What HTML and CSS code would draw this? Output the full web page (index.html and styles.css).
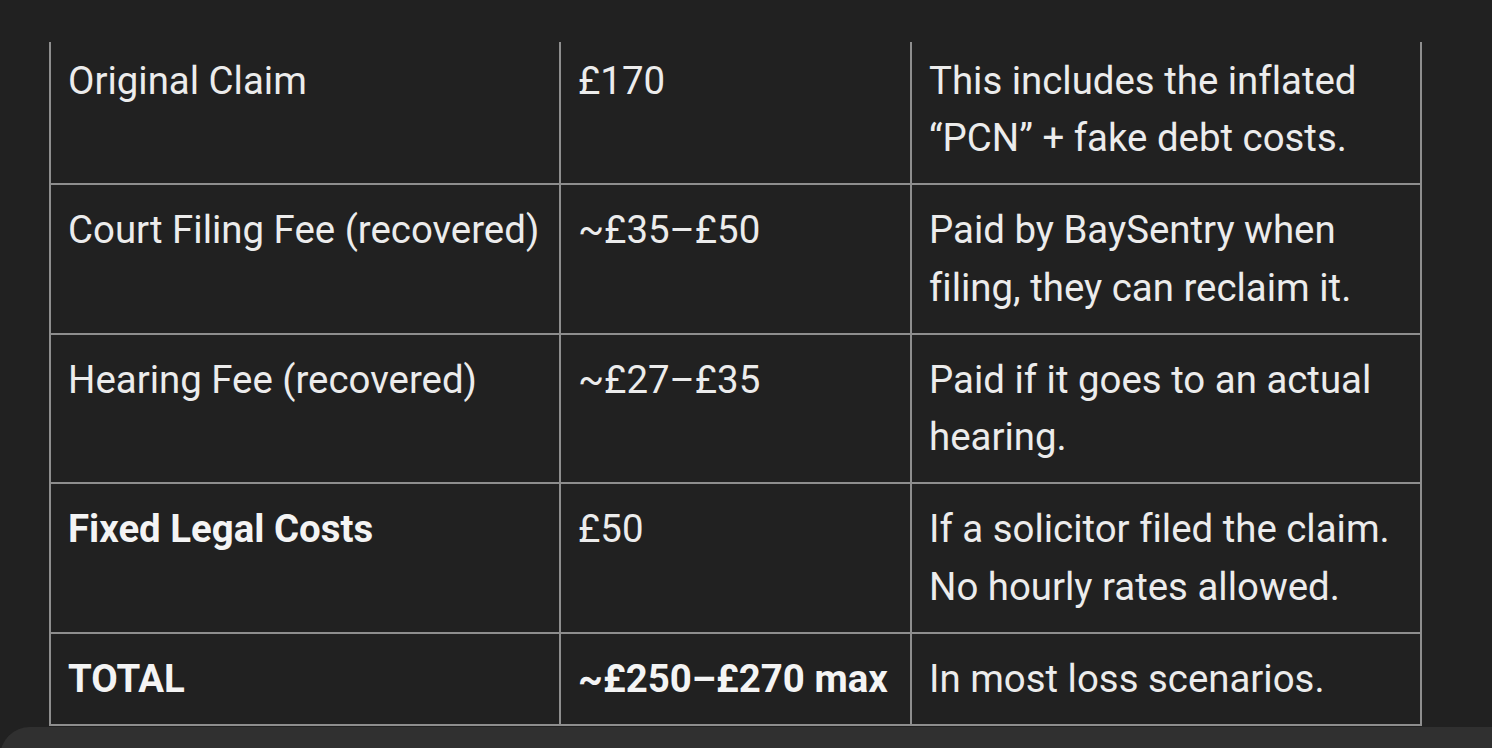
FILE: index.html
```html
<!DOCTYPE html>
<html lang="en">
<head>
<meta charset="utf-8">
<title>Costs table</title>
<link rel="stylesheet" href="styles.css">
</head>
<body>
<main class="page">
  <div class="scroller">
    <table class="costs">
      <colgroup>
        <col class="c1"><col class="c2"><col class="c3">
      </colgroup>
      <tbody>
        <tr>
          <td>Original Claim</td>
          <td>£170</td>
          <td>This includes the inflated “PCN” + fake debt costs.</td>
        </tr>
        <tr>
          <td>Court Filing Fee (recovered)</td>
          <td>~£35–£50</td>
          <td>Paid by BaySentry when filing, they can reclaim it.</td>
        </tr>
        <tr>
          <td>Hearing Fee (recovered)</td>
          <td>~£27–£35</td>
          <td>Paid if it goes to an actual hearing.</td>
        </tr>
        <tr>
          <td><strong>Fixed Legal Costs</strong></td>
          <td>£50</td>
          <td>If a solicitor filed the claim. No hourly rates allowed.</td>
        </tr>
        <tr>
          <td><strong>TOTAL</strong></td>
          <td><strong>~£250–£270 max</strong></td>
          <td>In most loss scenarios.</td>
        </tr>
      </tbody>
    </table>
  </div>
  <div class="composer"></div>
</main>
</body>
</html>
```

FILE: styles.css
```css
html, body {
  margin: 0;
  padding: 0;
  background: #212121;
  overflow: hidden;
  height: 100%;
}

.page {
  padding-top: 42px;
  font-family: Roboto, "Liberation Sans", sans-serif;
  color: #ececec;
  font-variant-ligatures: none;
}

.scroller {
  overflow: hidden;
  padding-left: 49px;
}

.costs {
  margin-top: -8.5px;
  border-collapse: collapse;
  table-layout: fixed;
  width: 1373px;
  font-size: 38.4px;
  line-height: 57.6px;
}

.c1 { width: 510px; }
.c2 { width: 351px; }
.c3 { width: 510px; }

.costs td {
  border: 2px solid #8e8e8e;
  padding: 16.2px 17px;
  vertical-align: top;
  text-align: left;
}

.costs strong {
  font-weight: 700;
  color: #f4f4f4;
}

.composer {
  margin-top: 1px;
  height: 40px;
  background: #303030;
  border-top-left-radius: 30px;
}
```
